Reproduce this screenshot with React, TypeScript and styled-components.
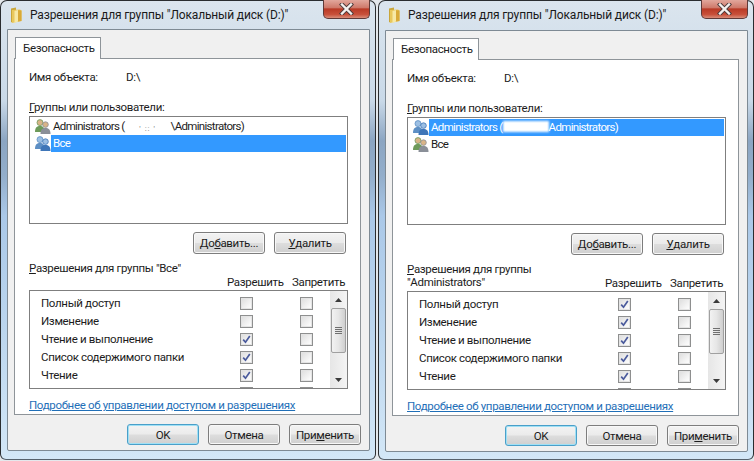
import React from "react";
import styled, { createGlobalStyle } from "styled-components";

interface PermissionRow {
  name: string;
  allow: boolean;
}

interface DialogProps {
  groupTitle: React.ReactNode;
  permissions: PermissionRow[];
  selected: "admins" | "all";
  shifted?: boolean;
  redaction: React.ReactNode;
}

const GlobalStyle = createGlobalStyle`
  html, body {
    margin: 0;
    padding: 0;
    background: #ffffff;
  }
  body {
    font-family: Roboto, "Open Sans", "Liberation Sans", sans-serif;
    font-size: 11.5px;
    letter-spacing: -0.33px;
    color: #1c1c1c;
  }
`;

const Desktop = styled.div`
  width: 754px;
  height: 461px;
  display: flex;
  overflow: hidden;
  background: #e4e8ec;
`;

const Frame = styled.div<{ $shifted?: boolean }>`
  width: 376px;
  height: 460px;
  flex: none;
  box-sizing: border-box;
  margin-left: ${(props) => (props.$shifted ? "2px" : "0")};
  border: 1px solid #2a2d30;
  border-bottom-color: #56616c;
  border-radius: 7px 7px 6px 6px;
  background: linear-gradient(
    180deg,
    #dbe5ee 0,
    #c9d9e8 100px,
    #8ba5c2 140px,
    #93aecb 175px,
    #aac8e8 215px,
    #bcd6ee 330px,
    #d3e7f7 100%
  );
  display: flex;
  flex-direction: column;
  padding-right: 5px;
  padding-left: 6px;
`;

const TitleBar = styled.div<{ $shifted?: boolean }>`
  height: ${(props) => (props.$shifted ? "29px" : "28px")};
  flex: none;
  display: flex;
  align-items: flex-start;
  margin-left: 3px;
`;

const FolderIcon = styled.svg`
  width: 12px;
  height: 17px;
  margin-top: 6px;
  flex: none;
`;

const WindowTitle = styled.div`
  margin-left: 8px;
  margin-top: 6px;
  font-size: 12px;
  letter-spacing: -0.15px;
  line-height: 17px;
  color: #1a1a1a;
  white-space: nowrap;
`;

const CloseButton = styled.div`
  margin-left: auto;
  width: 47px;
  height: 19px;
  margin-top: -1px;
  border: 1px solid #5f3a38;
  border-top: none;
  border-radius: 0 0 5px 5px;
  box-sizing: border-box;
  background: linear-gradient(180deg, #e2a79c 0, #cf7a6b 42%, #b93a26 50%, #c8503a 80%, #d98c78 100%);
  display: flex;
  align-items: center;
  justify-content: center;
`;

const Client = styled.div`
  width: 363px;
  height: 422px;
  flex: none;
  box-sizing: border-box;
  border: 1px solid #7e8a94;
  border-radius: 0 0 2px 2px;
  background: #f0f0f0;
  padding: 7px 8px 0 6px;
`;

const TabStrip = styled.div`
  height: 21px;
  display: flex;
  padding-left: 1px;
  position: relative;
  z-index: 1;
`;

const Tab = styled.div`
  width: 86px;
  height: 22px;
  box-sizing: border-box;
  border: 1px solid #8e9499;
  border-bottom: none;
  background: #ffffff;
  line-height: 21px;
  padding-left: 7px;
  color: #222222;
`;

const TabPanel = styled.div`
  width: 347px;
  height: 357px;
  box-sizing: border-box;
  border: 1px solid #8e9499;
  background: #ffffff;
  padding: 10px 12px 0 14px;
`;

const NameRow = styled.div`
  height: 16px;
  line-height: 16px;
  display: grid;
  grid-template-columns: 97px 1fr;
`;

const FieldLabel = styled.div`
  margin-top: 14px;
  height: 16px;
  line-height: 16px;
`;

const Key = styled.span`
  text-decoration: underline;
`;

const UserList = styled.div`
  margin-top: 1px;
  height: 108px;
  box-sizing: border-box;
  border: 1px solid #7f7f7f;
  padding: 1px 1px 0 4px;
  background: #ffffff;
`;

const UserRow = styled.div`
  height: 17px;
  display: flex;
  align-items: center;
`;

const UserIcon = styled.svg`
  width: 17px;
  height: 17px;
  flex: none;
`;

const UserName = styled.div<{ $selected: boolean }>`
  flex: ${(props) => (props.$selected ? "1" : "none")};
  height: 17px;
  line-height: 17px;
  padding-left: 2px;
  white-space: nowrap;
  letter-spacing: -0.68px;
  background: ${(props) => (props.$selected ? "#3399ff" : "transparent")};
  color: ${(props) => (props.$selected ? "#ffffff" : "#1c1c1c")};
`;

const Redacted = styled.span<{ $selected: boolean }>`
  display: inline-block;
  width: 46px;
  height: 11px;
  vertical-align: -1px;
  text-align: center;
  font-size: 8px;
  line-height: 9px;
  letter-spacing: 1px;
  color: #777777;
  background: ${(props) => (props.$selected ? "#ffffff" : "transparent")};
  filter: ${(props) => (props.$selected ? "blur(1px)" : "none")};
`;

const ButtonRow = styled.div`
  margin-top: 8px;
  display: flex;
  justify-content: flex-end;
  gap: 9px;
  padding-right: 2px;
`;

const DialogButton = styled.div<{ $primary?: boolean; $height?: number }>`
  width: 72px;
  height: ${(props) => props.$height ?? 22}px;
  box-sizing: border-box;
  border: 1px solid ${(props) => (props.$primary ? "#4a9fc9" : "#7d7d7d")};
  border-radius: 3px;
  background: linear-gradient(180deg, #f3f3f3 0, #ebebeb 48%, #dddddd 52%, #cfcfcf 100%);
  box-shadow: inset 0 0 0 1px ${(props) => (props.$primary ? "#9fe0f5" : "#f8f8f8")};
  display: flex;
  align-items: center;
  justify-content: center;
  color: #1c1c1c;
`;

const PermissionHead = styled.div`
  margin-top: 8px;
  height: 28px;
  display: grid;
  grid-template-columns: 198px 65px 1fr;
`;

const GroupLabel = styled.div`
  line-height: 13px;
  white-space: nowrap;
  width: 198px;
`;

const ColumnLabel = styled.div`
  align-self: end;
  line-height: 16px;
  white-space: nowrap;
`;

const PermissionList = styled.div`
  height: 99px;
  box-sizing: border-box;
  border: 1px solid #7f7f7f;
  display: flex;
  background: #ffffff;
`;

const RowArea = styled.div`
  flex: 1;
  overflow: hidden;
  padding: 3px 0 0 11px;
`;

const PermissionItem = styled.div`
  height: 18px;
  display: grid;
  grid-template-columns: 152px 13px 13px;
  column-gap: 47px;
  align-items: center;
  white-space: nowrap;
`;

const CheckBox = styled.div`
  width: 13px;
  height: 13px;
  box-sizing: border-box;
  border: 1px solid #8e8f8f;
  background: linear-gradient(135deg, #dcdcdc 0, #f6f6f6 70%, #ffffff 100%);
  box-shadow: inset 0 0 0 1px #e4e4e4;
  display: flex;
  align-items: center;
  justify-content: center;
`;

const Scrollbar = styled.div`
  width: 17px;
  flex: none;
  background: linear-gradient(90deg, #e6e6e6, #f4f4f4);
  display: flex;
  flex-direction: column;
  align-items: center;
`;

const ArrowCell = styled.div`
  height: 17px;
  width: 100%;
  flex: none;
  display: flex;
  align-items: center;
  justify-content: center;
`;

const Thumb = styled.div`
  width: 15px;
  height: 45px;
  flex: none;
  box-sizing: border-box;
  border: 1px solid #a0a0a0;
  border-radius: 2px;
  background: linear-gradient(90deg, #f2f2f2 0, #e6e6e6 50%, #cfcfcf 100%);
  display: flex;
  flex-direction: column;
  align-items: center;
  justify-content: center;
  gap: 1px;
`;

const GripLine = styled.div`
  width: 7px;
  height: 1px;
  background: #6f6f6f;
`;

const TrackFill = styled.div`
  flex: 1;
`;

const HelpLink = styled.a`
  display: block;
  margin-top: 8px;
  line-height: 16px;
  color: #1f6fb8;
  text-decoration: underline;
  white-space: nowrap;
`;

const Footer = styled.div`
  margin-top: 9px;
  display: flex;
  justify-content: flex-end;
  gap: 9px;
`;

const Folder = () => (
  <FolderIcon viewBox="0 0 12 17">
    <path d="M1 1.5 L6 0.5 L6 13 L1 15.5 Z" fill="#c9a63a" />
    <path d="M2 3 L10 2.5 L11.5 3.5 L11.5 14 L2 16 Z" fill="#e9c85c" />
    <path d="M4.5 4 L8 3 L8 14.5 L4.5 16 Z" fill="#f7e9a6" />
    <path d="M8 3.2 L11.5 3.5 L11.5 14 L8 14.6 Z" fill="#d9aa38" />
  </FolderIcon>
);

const CloseGlyph = () => (
  <svg width="15" height="12" viewBox="0 0 15 12">
    <path d="M3 1.5 L12 10.5 M12 1.5 L3 10.5" stroke="#4c3a3a" strokeWidth="4.2" strokeLinecap="square" />
    <path d="M3 1.5 L12 10.5 M12 1.5 L3 10.5" stroke="#f4f1ef" strokeWidth="2.4" strokeLinecap="square" />
  </svg>
);

// two people: the one in front changes colour with selection
const People = ({ blue }: { blue: boolean }) => {
  const back = blue ? "#5d8fc4" : "#6d9a5a";
  const front = blue ? "#3f76b8" : "#8a8f98";
  const head = blue ? "#9cbfe3" : "#d9b487";
  return (
    <UserIcon viewBox="0 0 17 17">
      <circle cx="6" cy="4.6" r="3" fill={head} stroke={back} strokeWidth="0.8" />
      <path d="M1 14 C1 9.5 3 8 6 8 C9 8 10.5 9.5 10.5 14 Z" fill={back} />
      <circle cx="11.5" cy="6.6" r="2.8" fill={head} stroke={front} strokeWidth="0.8" />
      <path d="M6.5 16 C6.5 11.5 8.5 10 11.5 10 C14.5 10 16.5 11.5 16.5 16 Z" fill={front} />
    </UserIcon>
  );
};

const Check = () => (
  <svg width="9" height="9" viewBox="0 0 9 9">
    <path d="M1.2 4.6 L3.5 7.2 L7.8 1" fill="none" stroke="#4a5a9c" strokeWidth="1.7" />
  </svg>
);

const Arrow = ({ up }: { up: boolean }) => (
  <svg width="7" height="4" viewBox="0 0 7 4">
    <path d={up ? "M3.5 0 L7 4 L0 4 Z" : "M0 0 L7 0 L3.5 4 Z"} fill="#3a3a3a" />
  </svg>
);

const Dialog: React.FC<DialogProps> = ({ groupTitle, permissions, selected, shifted, redaction }) => {
  const adminsSelected = selected === "admins";
  return (
    <Frame $shifted={shifted}>
      <TitleBar $shifted={shifted}>
        <Folder />
        <WindowTitle>Разрешения для группы "Локальный диск (D:)"</WindowTitle>
        <CloseButton>
          <CloseGlyph />
        </CloseButton>
      </TitleBar>
      <Client>
        <TabStrip>
          <Tab>Безопасность</Tab>
        </TabStrip>
        <TabPanel>
          <NameRow>
            <div>Имя объекта:</div>
            <div>D:\</div>
          </NameRow>
          <FieldLabel>
            <Key>Г</Key>руппы или пользователи:
          </FieldLabel>
          <UserList>
            <UserRow>
              <People blue={adminsSelected} />
              <UserName $selected={adminsSelected}>
                Administrators ({redaction}
                {adminsSelected ? "Administrators)" : "\\Administrators)"}
              </UserName>
            </UserRow>
            <UserRow>
              <People blue={!adminsSelected} />
              <UserName $selected={!adminsSelected}>Все</UserName>
            </UserRow>
          </UserList>
          <ButtonRow>
            <DialogButton>
              До<Key>б</Key>авить...
            </DialogButton>
            <DialogButton>
              <Key>У</Key>далить
            </DialogButton>
          </ButtonRow>
          <PermissionHead>
            <GroupLabel>{groupTitle}</GroupLabel>
            <ColumnLabel>Разрешить</ColumnLabel>
            <ColumnLabel>Запретить</ColumnLabel>
          </PermissionHead>
          <PermissionList>
            <RowArea>
              {permissions.map((row, index) => (
                <PermissionItem key={index}>
                  <div>{row.name}</div>
                  <CheckBox>{row.allow && <Check />}</CheckBox>
                  <CheckBox />
                </PermissionItem>
              ))}
            </RowArea>
            <Scrollbar>
              <ArrowCell>
                <Arrow up />
              </ArrowCell>
              <Thumb>
                <GripLine />
                <GripLine />
                <GripLine />
                <GripLine />
              </Thumb>
              <TrackFill />
              <ArrowCell>
                <Arrow up={false} />
              </ArrowCell>
            </Scrollbar>
          </PermissionList>
          <HelpLink>Подробнее об управлении доступом и разрешениях</HelpLink>
        </TabPanel>
        <Footer>
          <DialogButton $primary $height={21}>OK</DialogButton>
          <DialogButton $height={21}>Отмена</DialogButton>
          <DialogButton $height={21}>
            При<Key>м</Key>енить
          </DialogButton>
        </Footer>
      </Client>
    </Frame>
  );
};

// the sixth row is scrolled almost out of view, only its boxes show
const allGroupRows: PermissionRow[] = [
  { name: "Полный доступ", allow: false },
  { name: "Изменение", allow: false },
  { name: "Чтение и выполнение", allow: true },
  { name: "Список содержимого папки", allow: true },
  { name: "Чтение", allow: true },
  { name: "", allow: false },
];

const adminRows: PermissionRow[] = [
  { name: "Полный доступ", allow: true },
  { name: "Изменение", allow: true },
  { name: "Чтение и выполнение", allow: true },
  { name: "Список содержимого папки", allow: true },
  { name: "Чтение", allow: true },
  { name: "", allow: true },
];

const App: React.FC = () => {
  return (
    <>
      <GlobalStyle />
      <Desktop>
        <Dialog
          selected="all"
          permissions={allGroupRows}
          redaction={<Redacted $selected={false}>' :: '</Redacted>}
          groupTitle={
            <>
              <Key>Р</Key>азрешения для группы "Все"
            </>
          }
        />
        <Dialog
          shifted
          selected="admins"
          permissions={adminRows}
          redaction={<Redacted $selected />}
          groupTitle={
            <>
              <Key>Р</Key>азрешения для группы
              <br />
              "Administrators"
            </>
          }
        />
      </Desktop>
    </>
  );
};

export default App;
